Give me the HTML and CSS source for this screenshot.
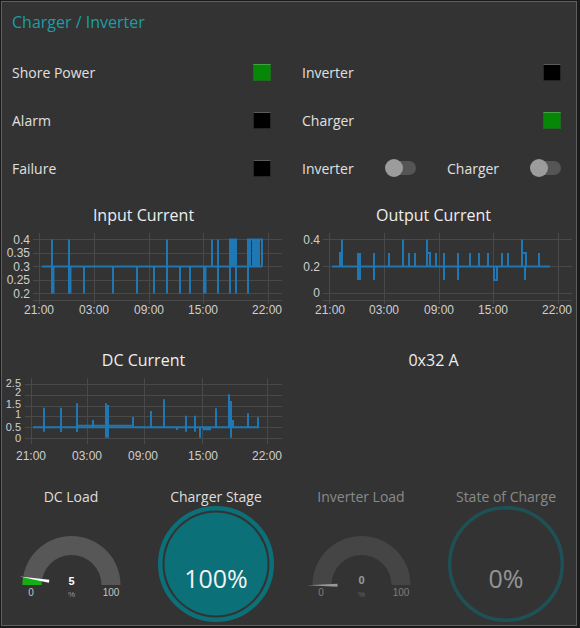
FILE: index.html
```html
<!DOCTYPE html>
<html>
<head>
<meta charset="utf-8">
<link rel="stylesheet" href="styles.css">
</head>
<body>
<div class="panel">
  <div class="title">Charger / Inverter</div>
  <div class="grid">
    <div class="cell span2"><span>Shore Power</span><i class="led on"></i></div>
    <div class="cell span2"><span>Inverter</span><i class="led"></i></div>
    <div class="cell span2"><span>Alarm</span><i class="led"></i></div>
    <div class="cell span2"><span>Charger</span><i class="led on"></i></div>
    <div class="cell span2"><span>Failure</span><i class="led"></i></div>
    <div class="cell"><span>Inverter</span><i class="toggle"></i></div>
    <div class="cell"><span>Charger</span><i class="toggle"></i></div>

    <div class="chart span2">
      <div class="chart-title">Input Current</div>
      <svg class="plot" width="277" height="100" viewBox="0 0 277 100">
        <g transform="translate(1 0)">
          <g class="grid-lines">
            <path d="M27 9.5H276M27 23.5H276M27 36.5H276M27 50.5H276M27 63.5H276M27 70.5H276"/>
            <path d="M33.5 3V74M88.5 3V74M143.5 3V74M197.5 3V74M262.5 3V74"/>
          </g>
          <g class="ylab">
            <text x="24" y="13.5">0.4</text>
            <text x="24" y="27">0.35</text>
            <text x="24" y="40.5">0.3</text>
            <text x="24" y="54">0.25</text>
            <text x="24" y="67.5">0.2</text>
          </g>
          <g class="xlab">
            <text x="33" y="84">21:00</text>
            <text x="88" y="84">03:00</text>
            <text x="143" y="84">09:00</text>
            <text x="197" y="84">15:00</text>
            <text x="261" y="84">22:00</text>
          </g>
          <path class="line" d="M36 36.5H256 M46 9.5V63.5 M47.5 36.5V63.5 M63 9.5V63.5 M64.5 36.5V63.5 M78 36.5V63.5 M107 36.5V63.5 M131 36.5V63.5 M148 36.5V63.5 M161 9.5V63.5 M174 36.5V63.5 M184 36.5V63.5 M198 36.5V63.5 M199.5 36.5V63.5 M206 9.5V36.5 M212 9.5V63.5 M224 63.5V9.5H230V36.5 M226 9.5V36.5 M228 9.5V36.5 M230 36.5V63.5 M242 63.5V9.5H247V36.5 M244 9.5V36.5 M249 36.5V9.5H256V36.5 M251 9.5V36.5 M253 9.5V36.5"/>
        </g>
      </svg>
    </div>

    <div class="chart span2">
      <div class="chart-title">Output Current</div>
      <svg class="plot" width="277" height="100" viewBox="0 0 277 100">
        <g transform="translate(1 0)">
          <g class="grid-lines">
            <path d="M27 9.5H276M27 36.5H276M27 63.5H276M27 70.5H276"/>
            <path d="M33.5 3V74M88.5 3V74M143.5 3V74M197.5 3V74M262.5 3V74"/>
          </g>
          <g class="ylab">
            <text x="24" y="13.5">0.4</text>
            <text x="24" y="40.5">0.2</text>
            <text x="24" y="67">0</text>
          </g>
          <g class="xlab">
            <text x="34" y="84">21:00</text>
            <text x="88" y="84">03:00</text>
            <text x="143" y="84">09:00</text>
            <text x="197" y="84">15:00</text>
            <text x="261" y="84">22:00</text>
          </g>
          <path class="line" d="M36 36.5H254 M44 36.5V23H46 M46 9.5V36.5 M62 23V50 M64 23V50 M78 23V50 M93 23V36.5 M107 9.5V36.5 M113 23V36.5 M119 23V36.5 M131 36.5V9.5 M131 23H134V36.5 M140 23V36.5 M148 23V50 M162 23V50 M174 23V36.5 M183 23V36.5 M192 23V36.5 M198 36.5V50H201V36.5 M206 23V36.5 M212 23V36.5 M226 36.5V9.5 M226 23H230V36.5 M229 36.5V50 M243 23V36.5"/>
        </g>
      </svg>
    </div>

    <div class="chart span2">
      <div class="chart-title">DC Current</div>
      <svg class="plot" width="277" height="100" viewBox="0 0 277 100">
        <g transform="translate(1 0)">
          <g class="grid-lines">
            <path d="M19 9.5H276M19 20.5H276M19 31.5H276M19 41.5H276M19 52.5H276M19 63.5H276"/>
            <path d="M25.5 3V69M81.5 3V69M138.5 3V69M196.5 3V69M261.5 3V69"/>
          </g>
          <g class="ylab small">
            <text x="15" y="12">2.5</text>
            <text x="15" y="21">2</text>
            <text x="15" y="33">1.5</text>
            <text x="15" y="43">1</text>
            <text x="15" y="56">0.5</text>
            <text x="15" y="66.5">0</text>
          </g>
          <g class="xlab">
            <text x="25" y="85">21:00</text>
            <text x="81" y="85">03:00</text>
            <text x="137" y="85">09:00</text>
            <text x="197" y="85">15:00</text>
            <text x="261" y="85">22:00</text>
          </g>
          <path class="line thin" d="M72 50.5H127"/>
          <path class="line" d="M27 52.2H253 M38 56.7V32.7 M55 57V32.7 M71 57V28.3 M87 52V45 M100 62.7V28.3 M102 62.7V30 M127 52V42 M145 52V36 M158 52V24.3 M171 52V55 M180 56.7V40.7 M189 56.7V40.7 M194 52V62.7 M198 52V54.3H204V52 M210 52V33.3 M223 52V19.3 M225 62.7V26 M227 52V45 M242 52V38.3 M252 52V42.3"/>
        </g>
      </svg>
    </div>

    <div class="chart span2">
      <div class="chart-title">0x32 A</div>
    </div>

    <div class="gauge">
      <div class="gauge-title">DC Load</div>
      <svg class="dial" width="132" height="115" viewBox="0 0 132 115">
        <g transform="translate(1 0)">
          <path d="M16.5 76A49 49 0 0 1 114.5 76H95.5A30 30 0 0 0 35.5 76Z" fill="#575757"/>
          <path d="M16.5 76A49 49 0 0 1 17.1 68.3L35.87 71.3A30 30 0 0 0 35.5 76Z" fill="#12b012"/>
          <polygon points="13.5,67.5 43.33,70.72 42.87,73.68" fill="#ffffff"/>
          <text class="gv" x="65.5" y="76">5</text>
          <text class="gu" x="65.5" y="88">%</text>
          <text class="gm" x="25" y="86.5">0</text>
          <text class="gm" x="105" y="86.5">100</text>
        </g>
      </svg>
    </div>

    <div class="gauge">
      <div class="gauge-title">Charger Stage</div>
      <svg class="dial" width="132" height="115" viewBox="0 0 132 115">
        <g transform="translate(1 0)">
          <circle cx="65" cy="55" r="55.75" fill="none" stroke="#0b7077" stroke-width="4.5"/>
          <circle cx="65" cy="55" r="51.5" fill="#0b7077"/>
          <text class="pct" x="65" y="79">100%</text>
        </g>
      </svg>
    </div>

    <div class="gauge dim">
      <div class="gauge-title">Inverter Load</div>
      <svg class="dial" width="132" height="115" viewBox="0 0 132 115">
        <g transform="translate(1 0)">
          <path d="M16.5 76A49 49 0 0 1 114.5 76H95.5A30 30 0 0 0 35.5 76Z" fill="#575757"/>
          <polygon points="11.5,76.3 41.5,74.8 41.5,77.8" fill="#ffffff"/>
          <text class="gv" x="65.5" y="75">0</text>
          <text class="gu" x="65.5" y="88">%</text>
          <text class="gm" x="25" y="86.5">0</text>
          <text class="gm" x="105" y="86.5">100</text>
        </g>
      </svg>
    </div>

    <div class="gauge dim">
      <div class="gauge-title">State of Charge</div>
      <svg class="dial" width="132" height="115" viewBox="0 0 132 115">
        <g transform="translate(1 0)">
          <circle cx="65" cy="55" r="56.25" fill="none" stroke="#0b7077" stroke-width="3.5"/>
          <text class="pct" x="65" y="79">0%</text>
        </g>
      </svg>
    </div>
  </div>
</div>
</body>
</html>
```

FILE: styles.css
```css
html, body {
  margin: 0;
  padding: 0;
}

body {
  background: #1a1a1a;
  font-family: "Open Sans", "Noto Sans", sans-serif;
  width: 580px;
  height: 628px;
  overflow: hidden;
}

.panel {
  margin: 1px 0 0 1px;
  width: 576px;
  height: 625px;
  box-sizing: border-box;
  border: 1px solid #5e5e5e;
  background: #333333;
}

.title {
  height: 40px;
  line-height: 40px;
  padding-left: 10px;
  color: #1a9ea6;
  font-size: 16px;
}

.grid {
  display: grid;
  margin-top: 9px;
  padding-left: 3px;
  grid-template-columns: repeat(4, 132px);
  grid-template-rows: 42px 42px 42px 139px 139px 139px;
  column-gap: 13px;
  row-gap: 6px;
}

.cell {
  display: flex;
  align-items: center;
  justify-content: space-between;
  padding: 0 11px 0 7px;
  color: #e0e0e0;
  font-size: 14px;
}

.span2 {
  grid-column: span 2;
}

.led {
  display: block;
  width: 18px;
  height: 17px;
  box-sizing: border-box;
  background: #000;
  border: 1px solid #262626;
  border-top-color: #5a5a5a;
}

.led.on {
  background: #068806;
  border-color: #1f6a1f;
  border-top-color: #43a043;
}

.toggle {
  display: block;
  position: relative;
  width: 31px;
  height: 18px;
}

.toggle::before {
  content: "";
  position: absolute;
  left: 3px;
  top: 2px;
  width: 28px;
  height: 14px;
  border-radius: 7px;
  background: #555555;
}

.toggle::after {
  content: "";
  position: absolute;
  left: 0;
  top: 0;
  width: 18px;
  height: 18px;
  border-radius: 50%;
  background: #9c9c9c;
}

.chart {
  display: flex;
  flex-direction: column;
  align-items: center;
  padding-top: 5px;
}

.chart-title {
  height: 30px;
  line-height: 30px;
  font-size: 16px;
  color: #eeeeee;
  text-align: center;
}

.plot {
  display: block;
  overflow: visible;
}

.grid-lines path {
  stroke: #494949;
  stroke-width: 1;
  fill: none;
}

.ylab text,
.xlab text {
  font-family: "Liberation Sans", Arial, sans-serif;
  font-size: 12px;
  fill: #cfcfcf;
}

.ylab.small text {
  font-size: 11px;
}

.ylab text {
  text-anchor: end;
}

.xlab text {
  text-anchor: middle;
}

.line {
  fill: none;
  stroke: #1f77b4;
  stroke-width: 2;
}

.line.thin {
  stroke-width: 1.5;
}

.gauge {
  display: flex;
  flex-direction: column;
  align-items: center;
}

.gauge.dim {
  opacity: 0.5;
}

.gauge-title {
  height: 24px;
  line-height: 24px;
  font-size: 14px;
  color: #dedede;
  text-align: center;
}

.dial {
  display: block;
  overflow: visible;
}

.gv {
  font-family: "Liberation Sans", Arial, sans-serif;
  font-size: 11px;
  font-weight: bold;
  fill: #ffffff;
  text-anchor: middle;
}

.gu {
  font-family: "Liberation Sans", Arial, sans-serif;
  font-size: 8px;
  fill: #9a9a9a;
  text-anchor: middle;
}

.gm {
  font-family: "Liberation Sans", Arial, sans-serif;
  font-size: 10px;
  fill: #c4c4c4;
  text-anchor: middle;
}

.pct {
  font-family: "Open Sans", sans-serif;
  font-size: 25px;
  fill: #f2f2f2;
  text-anchor: middle;
}
```
